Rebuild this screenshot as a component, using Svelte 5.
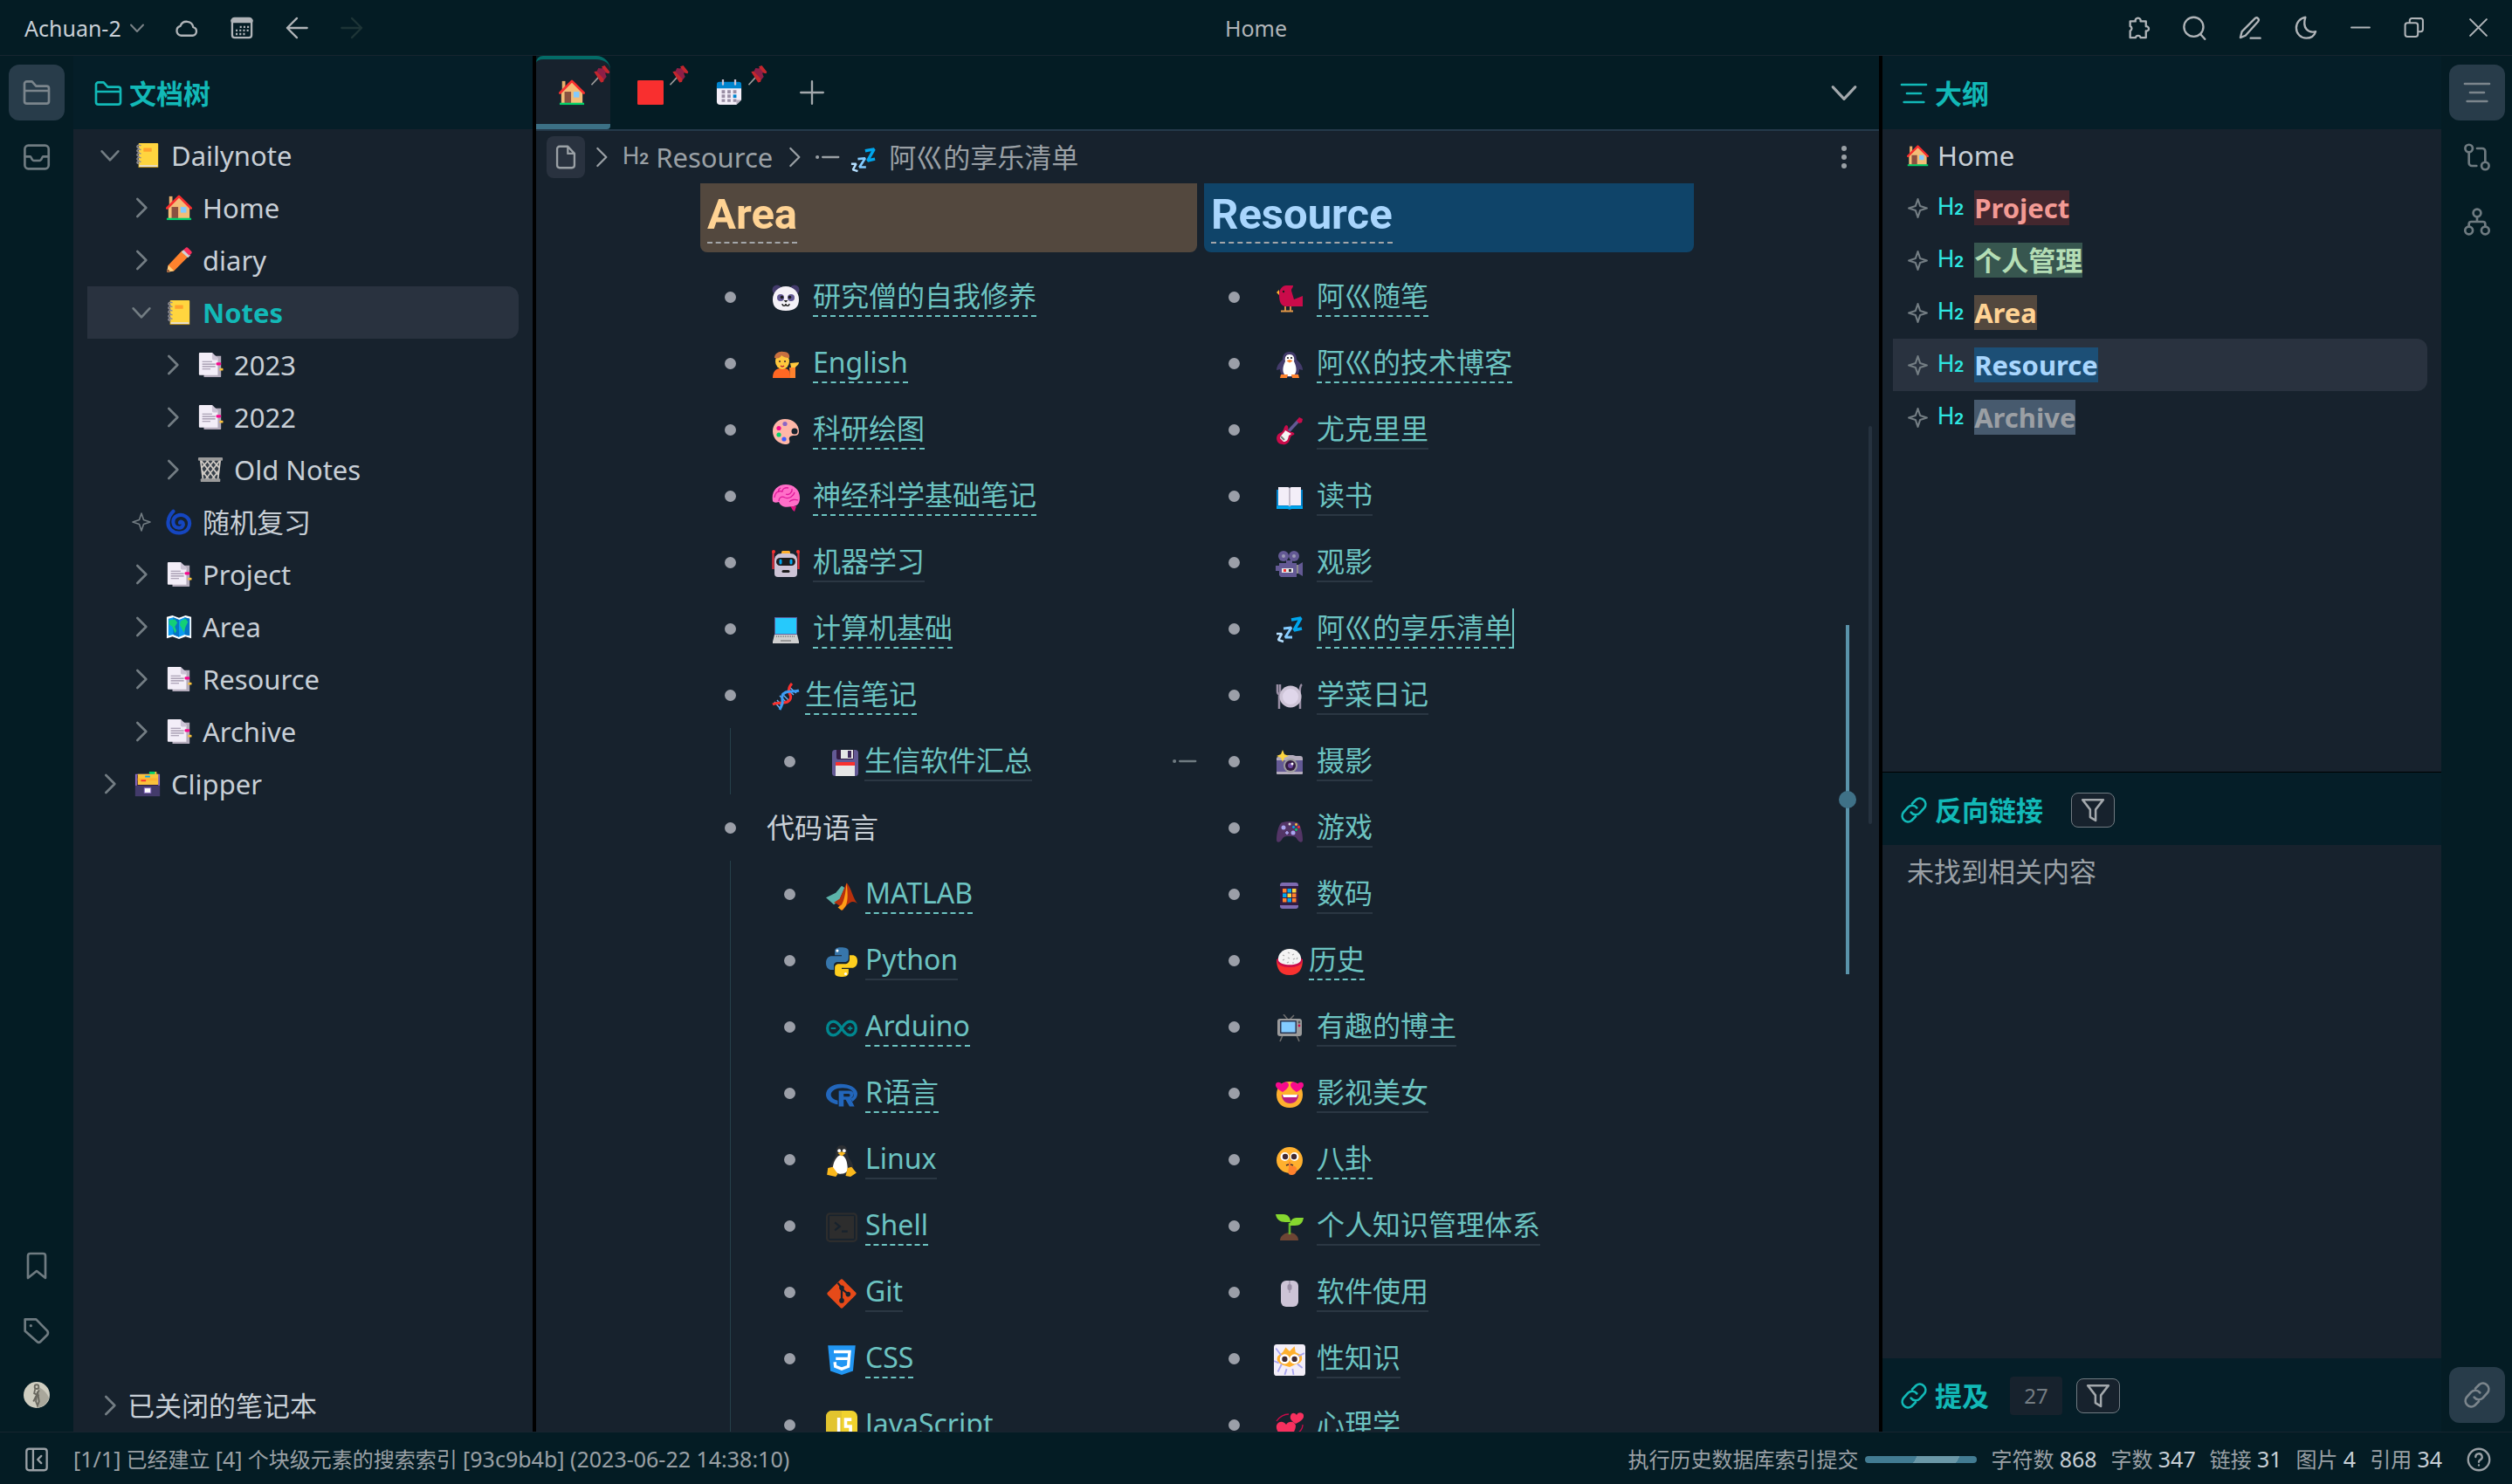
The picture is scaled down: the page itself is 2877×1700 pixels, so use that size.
<script>
  const line = {
    down: '<path d="M5 8.500l7 7.500 7-7.500"/>',
    right: '<path d="M8.500 4.500L16 12l-7.500 7.500"/>',
    cloud: '<path d="M6.500 19.500a4.800 4.800 0 0 1-.9-9.400 6.600 6.600 0 0 1 12.700 1.200 4.200 4.200 0 0 1-.5 8.200z"/>',
    calendar: '<rect x="2.500" y="2.500" width="19" height="19" rx="2.500"/><path d="M3 5h18" stroke-width="4"/><path d="M10 11h9M6 14.500h13M6 18h9" stroke-dasharray="1.800 1.800" stroke-linecap="butt"/>',
    back: '<path d="M12 2.500L2.500 12l9.500 9.500M2.500 12h19.500"/>',
    forward: '<path d="M12 2.500l9.500 9.500-9.500 9.500M21.500 12H2"/>',
    puzzle: '<path d="M4 5.500h5.200a2.600 2.600 0 1 1 5 0h5.300v5a2.300 2.300 0 1 1 0 4.500v6.500h-5.200a2.600 2.600 0 0 0-5 0H4v-6.700a2.500 2.500 0 0 0 0-4.600z"/>',
    search: '<circle cx="11.500" cy="11" r="9.500"/><path d="M18 18l4.500 5"/>',
    pen: '<path d="M2.500 21.500l1.500-6L17 2.500c2-1.500 4.500 1 3 3L7.500 19.500zM12.500 22h9.500"/>',
    moon: '<path d="M11.500 1.500C6 2.500 2.500 6.800 2.500 12c0 5.600 4.300 10 9.800 10 4.400 0 8-2.500 9.200-6.500-7 2-13.500-3-10-14z"/>',
    minus: '<path d="M2 12h20"/>',
    restore: '<rect x="2.500" y="7" width="14" height="15" rx="2.500"/><path d="M7.500 6.500V5A2.500 2.500 0 0 1 10 2h9A2.500 2.500 0 0 1 22 5v9a2.500 2.500 0 0 1-2.500 2.500h-2"/>',
    close: '<path d="M3 3l18 18M21 3L3 21"/>',
    folder: '<path d="M1.500 19V4.500a2 2 0 0 1 2-2H8l3.500 4H20.500a2 2 0 0 1 2 2V19.500a2 2 0 0 1-2 2H3.500a2 2 0 0 1-2-2zM1.500 10.500h21"/>',
    inbox: '<rect x="1.800" y="2" width="20.500" height="20" rx="3"/><path d="M2 11.500h4.500c.800 0 1.300 3.500 3 3.500h5c1.700 0 2.200-3.500 3-3.500H22"/>',
    bookmark: '<path d="M4.500 22.500V3.500a2 2 0 0 1 2-2h11a2 2 0 0 1 2 2v19L12 16.500z"/>',
    tag: '<path d="M2 2.500h9.500L21.200 12.500a3 3 0 0 1 0 3.200l-6 6a2 2 0 0 1-2.800 0L2 12.500z"/><path d="M7 8h.01" stroke-width="2.400"/>',
    list: '<path d="M1.500 4.500h21M6 12h12M3.500 19.500h17"/>',
    branch: '<circle cx="5" cy="4.500" r="3.200"/><circle cx="19" cy="19.500" r="3.200"/><path d="M5 8v9a2.500 2.500 0 0 0 2.500 2.500h4M19 16V7a2.500 2.500 0 0 0-2.500-2.500H12"/>',
    graph: '<circle cx="12" cy="4.500" r="3.300"/><circle cx="5" cy="19.500" r="3.300"/><circle cx="19" cy="19.500" r="3.300"/><path d="M12 8v4M5 16v-2a2 2 0 0 1 2-2h10a2 2 0 0 1 2 2v2"/>',
    link: '<path d="M10.500 6.500L14 3a5 5 0 0 1 7 7l-4 4.500a5 5 0 0 1-7.500-.5M13.500 17.500L10 21a5 5 0 0 1-7-7l4-4.500a5 5 0 0 1 7.500.5"/>',
    funnel: '<path d="M2.500 2.500h19l-7 9v10l-5-3v-7z"/>',
    page: '<path d="M14 1.500H6a2.500 2.500 0 0 0-2.500 2.500v16A2.500 2.500 0 0 0 6 22.500h12a2.500 2.500 0 0 0 2.500-2.500V8.500zM14 2v6.500h6"/>',
    plus: '<path d="M12 1v22M1 12h22"/>',
    dots: '<path d="M12 4.500h.01M12 12h.01M12 19.500h.01" stroke-width="4.500"/>',
    item: '<path d="M1.800 12h.01" stroke-width="3.500"/><path d="M7 12h15.500"/>',
    spark: '<path d="M12 2l2.500 7.500L22 12l-7.500 2.500L12 22l-2.500-7.500L2 12l7.500-2.500z"/>',
    dock: '<rect x="2" y="1.500" width="20" height="21" rx="2.500"/><path d="M8.500 2v20M16.500 8.500L13 12l3.500 3.500"/>',
    help: '<circle cx="12" cy="12" r="10.500"/><path d="M8.800 9.500a3.200 3.200 0 1 1 4.600 2.800c-1 .5-1.400 1-1.400 2M12 17.500h.01"/>'
  };

  const art = {
    notebook: '<rect x="5" y="1" width="24" height="30" rx="1" fill="#ffd53f"/><path d="M6 28h22v1.800H6z" fill="#e3dfe6"/><path d="M5 30h24v1H5z" fill="#b58a1c"/><rect x="11" y="7" width="10" height="4.500" rx=".6" fill="#ffa22d"/><g fill="none" stroke="#8d8a93" stroke-width="1.600"><path d="M8 4c-5-2-7 3-2 3M8 9c-5-2-7 3-2 3M8 14c-5-2-7 3-2 3M8 19c-5-2-7 3-2 3M8 24c-5-2-7 2-2 2"/></g>',
    house: '<path d="M4 2h4v12H4z" fill="#e8b06c"/><path d="M3 16L16 3l13 13v13H3z" fill="#f3bd78"/><path d="M1.500 16.500L16 2l14.500 14.500" fill="none" stroke="#f92f2f" stroke-width="3" stroke-linejoin="round" stroke-linecap="round"/><path d="M7 15h8v14H7z" fill="#8a5140"/><path d="M18 15h7v7h-7z" fill="#83cbff"/><path d="M1 28.500h30V31H1z" fill="#00d26a"/>',
    pencil: '<path d="M1 31l2-9L20 4l8 7L10 29z" fill="#ff822d"/><path d="M1 31l2-9 7 7z" fill="#ffce7c"/><path d="M1 31l1-4 3 2.500z" fill="#7d4533"/><path d="M19 6l3-3 8 7-3 3z" fill="#d3d3d3"/><path d="M21.500 3.500L24 1c1-1 2-1 3 0l4 4c1 1 1 2 0 3l-2.500 2.500z" fill="#f8305e"/>',
    papers: '<path d="M8 5h21v25a1 1 0 0 1-1 1H8z" fill="#b4acbc"/><path d="M3 1h15l7 7v20.500H3a1 1 0 0 1-1-1V2a1 1 0 0 1 1-1z" fill="#f3eef8"/><path d="M18 1l7 7v2h-5a2 2 0 0 1-2-2z" fill="#cdc4d6"/><path d="M6 12h12M6 15h16M6 18h16M6 21h10" stroke="#998ea4" stroke-width="1.200"/><rect x="23" y="13" width="6" height="3.500" rx="1.200" fill="#f70a8d"/><rect x="27" y="20" width="4.500" height="3" rx="1" fill="#f9c23c"/>',
    bin: '<path d="M3 4h26l-3 27H6z" fill="#37404a"/><path d="M4 4l18 24M11 4l14 18M18 4l9 10M28 4L10 28M21 4L7 22M14 4L5 14M5 16l10 13M27 16L17 29M4 4l3 25M28 4l-3 25" stroke="#d0cbc5" stroke-width="1.800"/><rect x="1" y="1" width="30" height="4" rx="1" fill="#9b9b9b"/><rect x="4" y="27" width="24" height="4" rx="1" fill="#9b9b9b"/>',
    cyclone: '<g fill="none" stroke="#1546c0" stroke-width="4.400" stroke-linecap="round"><path d="M17 17c0-3 5-1 4 3-2 5-11 4-12-3-1-8 8-12 15-8 8 5 6 18-5 20C8 31 1 23 3 14 4 8 7 5 9 3"/></g>',
    map: '<path d="M1 4l7-2 8 3 8-3 7 2v26l-7-2-8 3-8-3-7 2z" fill="#fff"/><path d="M3 6l6-1.500 7 3 7-3L29 6v21l-6-1.500-7 3-7-3L3 27z" fill="#0a9bf0"/><path d="M9 4.500l7 3v21l-7-3zM23 4.500L29 6v21l-6-1.500z" fill="#0773c4"/><path d="M4 8l7-1 3 4-3 5 2 5-2 3-3-8-4-3zM18 9l6-3 3 4-3 6-2 7-3-6-2-3z" fill="#14cf76"/>',
    cabinet: '<path d="M1 4h30v27H1z" fill="#8b6bc7"/><path d="M3 5h26v14H3z" fill="#321b41"/><path d="M4 4h15V1h8v3h2v13H4z" fill="#f9c23c"/><path d="M18 1h7v3h-7z" fill="#00d26a"/><path d="M4 9h24v3H4z" fill="#ffb02e"/><rect x="13" y="6" width="6" height="2" fill="#00a6ed"/><rect x="8" y="11" width="6" height="2" fill="#f8312f"/><path d="M1 18h30v13H1z" fill="#433b6b"/><rect x="12" y="21" width="8" height="6" fill="#fff" stroke="#8b6bc7"/>',
    red: '<rect x="0" y="1" width="32" height="30" rx="1.500" fill="#f92f2f"/>',
    date: '<path d="M1 8h30v17l-6 6H5a4 4 0 0 1-4-4z" fill="#f3eef8"/><path d="M31 25l-6 6v-6z" fill="#b4acbc"/><path d="M1 6a3 3 0 0 1 3-3h24a3 3 0 0 1 3 3v5H1z" fill="#0084ce"/><path d="M8.500 0v6M23.500 0v6" stroke="#cdc4d6" stroke-width="2.400" stroke-linecap="round"/><path d="M7 13h4v4H7zM14 13h4v4h-4zM21 13h4v4h-4zM7 18.500h4v4H7zM14 18.500h4v4h-4zM7 24h4v3.500H7zM14 24h4v3.500h-4zM21 24h4v3.500h-4z" fill="#998ea4"/><path d="M21 18.500h4v4h-4z" fill="#0084ce"/>',
    pin: '<path d="M14 18L2 31" stroke="#9b9b9b" stroke-width="2.400"/><path d="M10 10l12 13 4-5-2-5 3-6-4-5-5 3-5-1z" fill="#8e1f47"/><path d="M20 1l3-1 8 10-1 3-4-1-8-10zM6 10l4-1 12 13-1 4-4 1z" fill="#c4262e"/>',
    zzz: '<g fill="none" stroke-linejoin="bevel"><path d="M18 4l11-2-8 14 9-2" stroke="#00a6ed" stroke-width="3.600"/><path d="M9 14l9-1-7 11h8" stroke="#83cbff" stroke-width="2.800"/><path d="M1 20l6 0-4 7 6 2" stroke="#b5dfff" stroke-width="2.600"/></g>',
    panda: '<circle cx="6" cy="6" r="5.500" fill="#433b6b"/><circle cx="26" cy="6" r="5.500" fill="#433b6b"/><path d="M16 2c9 0 15 7 15 15s-4 13-15 13S1 25 1 17 7 2 16 2z" fill="#f4f1f7"/><ellipse cx="10" cy="15" rx="4" ry="4" fill="#635994"/><ellipse cx="22" cy="15" rx="4" ry="4" fill="#635994"/><circle cx="11.500" cy="14.500" r="1.800" fill="#1c1c1c"/><circle cx="20.500" cy="14.500" r="1.800" fill="#1c1c1c"/><path d="M13.500 18h5L16 20.500z" fill="#1c1c1c"/><path d="M12 22c0 3 4 3 4 0 0 3 4 3 4 0" fill="none" stroke="#1c1c1c" stroke-width="1.300"/>',
    person: '<path d="M1 31c0-7 3-11 9-11h4c6 0 7 4 7 11z" fill="#ff6723"/><path d="M20 19h7v12h-6z" fill="#ff822d"/><path d="M21 14l10-1c0 3-3 4-4 6h-5z" fill="#ffc83d"/><ellipse cx="12" cy="12" rx="8" ry="9" fill="#ffc83d"/><path d="M3 8c0-5 5-8 10-7 5-.5 8 3 7 7-4 0-7-1-9-3-1 3-4 4-8 3z" fill="#c8703f"/><circle cx="9" cy="12" r="1.100" fill="#402a32"/><circle cx="15" cy="12" r="1.100" fill="#402a32"/><path d="M10 17q2 1.800 4 0" stroke="#bb1d3b" stroke-width="1.400" fill="none"/>',
    palette: '<path d="M15 2C7 2 1 8 1 16s6 14 14 15c5 0 6-2 5-5-1-4 2-5 6-5 3 0 5-1 5-5C31 8 24 2 15 2z" fill="#ffb7a8"/><circle cx="26" cy="16" r="3.500" fill="#17222d"/><circle cx="15" cy="7.500" r="2.600" fill="#8d65c5"/><circle cx="8" cy="12.500" r="2.600" fill="#f70a8d"/><circle cx="8" cy="20" r="2.600" fill="#00d26a"/><circle cx="14" cy="25" r="2.600" fill="#3f5fff"/>',
    brain: '<path d="M20 25l8 1-2 6c-2-1-3-3-4-5z" fill="#e0107f"/><path d="M1 20C-1 9 6 1 16 1c9 0 16 6 16 15 0 8-4 10-9 10-8 2-13 0-15-5-3 1-6 1-7-1z" fill="#ff6fc8"/><path d="M3 16c1-7 5-8 9-7 0-3 3-5 7-4M8 20c0-4 3-6 7-4 5 2 10-2 11-6M16 12c4 2 8-3 7-6M20 21c2-3 7-3 10-2M10 5c-2 1-3 3-2 5" fill="none" stroke="#e0189a" stroke-width="1.300"/>',
    robot: '<path d="M1.500 2v20M30.500 2v20" stroke="#e0303a" stroke-width="2.200"/><circle cx="2" cy="2" r="2" fill="#f8312f"/><circle cx="30" cy="2" r="2" fill="#f8312f"/><rect x="11" y="1" width="10" height="4" rx="1.500" fill="#ffb02e"/><path d="M3 12c0-5 3-8 8-8h10c5 0 8 3 8 8v15a4 4 0 0 1-4 4H7a4 4 0 0 1-4-4z" fill="#cdc4d6"/><rect x="5" y="9" width="22" height="9" rx="4.500" fill="#1c1c1c"/><rect x="8.500" y="10.500" width="3" height="6" rx="1.500" fill="#00a6ed"/><rect x="20.500" y="10.500" width="3" height="6" rx="1.500" fill="#00a6ed"/><rect x="11.500" y="23" width="9" height="3" rx="1.500" fill="#1c1c1c"/>',
    laptop: '<path d="M3 1h26v20H3z" fill="#5b62a0"/><path d="M4 2h24v18H4z" fill="#26c9fc"/><path d="M3 21h26l2 8v2H1v-2z" fill="#cfcfcf"/><path d="M5 23h22" stroke="#8f8f8f" stroke-width="2" stroke-dasharray="1 1"/><path d="M10 28h12" stroke="#999" stroke-width="2"/>',
    dna: '<g stroke="#6bb1f5" stroke-width="1.400"><path d="M20 5l8 7M18 8l7 6M12 13l8 8M9 15l8 8M3 22l6 7M6 20l5 6"/></g><path d="M23 1c-4 4-4 9-2 13s-1 9-8 9c-4 0-8 0-12 2" fill="none" stroke="#f8312f" stroke-width="3"/><path d="M31 9c-6 2-9 0-15 2-7 3-3 9-4 13-1 3-2 5-3 7" fill="none" stroke="#3b9cf5" stroke-width="3"/>',
    disk: '<rect x="1" y="1" width="30" height="30" rx="3.500" fill="#635994"/><path d="M6 1h20v9a2 2 0 0 1-2 2H8a2 2 0 0 1-2-2z" fill="#321b41"/><path d="M11 1h14v10H11z" fill="#e6e6e6"/><path d="M19 2h4v8h-4z" fill="#402a5b"/><path d="M5 16h22v15H5z" fill="#e6e6e6"/><path d="M5 15h22v4H5z" fill="#f8312f"/>',
    matlab: '<path d="M0 18l10-5 6-7 3 2-6 14-5 3z" fill="#5cb4ab"/><path d="M8 23l6-4L21 3c4 3 6 15 11 21-4-3-8-3-15 7-2-4-5-7-9-8z" fill="#b8300c"/><path d="M21 3c-1 9-2 17-5 22l-4 3 4 3c6-4 7-11 5-28z" fill="#ff9d16"/>',
    python: '<path d="M15 1c-5 0-6 2-6 4v4h7v1H6c-3 0-6 2-6 7s3 7 6 7h2v-4c0-3 2-4 4-4h7c3 0 4-2 4-4V5c0-3-3-4-8-4z" fill="#3776ab"/><path d="M17 31c5 0 6-2 6-5v-3h-7v-1h10c4 0 6-3 6-7s-2-6-5-6h-3v4c0 3-2 5-5 5h-6c-3 0-4 2-4 4v5c0 3 3 4 8 4z" fill="#ffcf1f"/><circle cx="11.500" cy="4.500" r="1.400" fill="#fff"/><circle cx="20" cy="28" r="1.400" fill="#fff"/>',
    arduino: '<g fill="none" stroke="#00878f" stroke-width="3"><path d="M16 16c-3-5-5-7-8.500-7S1.500 12 1.500 16s2.500 7 6 7S13 21 16 16s5-7 8.500-7 6 3 6 7-2.500 7-6 7S19 21 16 16z"/><path d="M5 16h5M22 16h5M24.500 13.500v5" stroke-width="1.600"/></g>',
    rlang: '<path fill-rule="evenodd" d="M15 5C6 5 0 10 0 16c0 5 5 9 12 10v-4c-4-1-7-3-7-6 0-4 5-7 12-7s11 3 11 6c0 2-1 4-3 5l2 3c3-2 5-5 5-8 0-6-8-10-17-10zM13 12h11c5 0 6 7 1 8l4 8h-5l-4-7h-2v7h-5zm5 3v3h5c2 0 2-3 0-3z" fill="#2266bb"/>',
    linux: '<path d="M16 0c5 0 6 4 6 9 1 5 6 8 6 15l-4 6H8l-4-6c0-6 5-10 6-15 0-5 1-9 6-9z" fill="#2c2f33"/><path d="M15 10c5 0 7 8 7 14 0 4-4 5-7 5s-8-2-8-6c0-5 4-13 8-13z" fill="#fff"/><circle cx="13.500" cy="5.500" r="1.700" fill="#fff"/><circle cx="18.500" cy="5.500" r="1.700" fill="#fff"/><path d="M12 8l4-1.500L20 8l-4 3z" fill="#fbb81c"/><path d="M1 30l1-7 5-1 5 7-2 3zM20 31l2-8 4-1 5 6-6 4z" fill="#fbb81c"/>',
    shell: '<rect x="1" y="2" width="30" height="28" rx="3" fill="none" stroke="#2d2d2d" stroke-width="2"/><rect x="3.500" y="4.500" width="25" height="23" fill="#2d2d2d"/><path d="M9 11l5 4-5 4M16 20h6" fill="none" stroke="#17222d" stroke-width="2"/>',
    git: '<path d="M14.500 2a2 2 0 0 1 3 0L30 14.500a2 2 0 0 1 0 3L17.500 30a2 2 0 0 1-3 0L2 17.500a2 2 0 0 1 0-3z" fill="#e64a19"/><path d="M12 5l4 5v13M16 11l6 5" stroke="#17222d" stroke-width="2" fill="none"/><circle cx="16" cy="10" r="2.500" fill="#17222d"/><circle cx="16" cy="23" r="2.500" fill="#17222d"/><circle cx="22.500" cy="16.500" r="2.500" fill="#17222d"/>',
    css: '<path d="M2 1h28l-2.500 26L16 31 4.500 27z" fill="#2196f3"/><path d="M8 7.500h16l-1.300 15L16 25l-6.500-2.500L9 18M22 14.500H10" fill="none" stroke="#fff" stroke-width="3"/>',
    js: '<rect x="0" y="0" width="32" height="32" rx="6" fill="#f0d22e"/><path d="M0 6a6 6 0 0 1 6-6h10v32H0z" fill="#e2c42f"/><path d="M13 7v16c0 3-4 4-6 1M26 9h-6v7h5v9h-6" fill="none" stroke="#fff" stroke-width="3.200"/>',
    bird: '<path d="M4 12C4 5 8 1 12 1h8c0 3-2 3-2 6l3 10 10-4v12H12c-6 0-8-6-8-13z" fill="#ca0b4a"/><path d="M4 6L1 9l3 3z" fill="#ffb02e"/><circle cx="9" cy="8" r="1.200" fill="#1c1c1c"/><path d="M11 25v5M17 25v5M6 30.500h14" stroke="#e19747" stroke-width="1.800"/>',
    penguin: '<path d="M16 1c6 0 8 4 8 9 2 2 7 6 7 12l-4-1c0 6-4 9-11 9S5 27 5 21l-4 1c0-6 5-10 7-12 0-5 2-9 8-9z" fill="#433b6b"/><path d="M16 4c4 0 6 3 5 8 4 8 4 17-5 17s-9-9-5-17c-1-5 1-8 5-8z" fill="#fff"/><circle cx="14" cy="8" r="1.100" fill="#1c1c1c"/><circle cx="18" cy="8" r="1.100" fill="#1c1c1c"/><path d="M12.500 11.500q3.500-3 7 0l-3.500 2z" fill="#ff822d"/><path d="M6 27h8l-1 4H5zM18 27h8l1 4h-8z" fill="#ff822d"/>',
    guitar: '<path d="M13 18L27 3" stroke="#635994" stroke-width="3.500"/><path d="M24 4l3-4 4 2-1 4-3 1z" fill="#ca0b4a"/><path d="M12 9c2 0 3 3 2 6l4 2c3 0 4 2 3 3-4 1-4 3-5 6-2 6-8 6-12 4-4-3-4-10 1-12 5-1 4-8 7-9z" fill="#ca0b4a"/><path d="M11 15l7 4-3 2c-1 5-2 7-6 7l-4-4c0-3 4-5 6-9z" fill="#f4f4f4"/><path d="M6 22l4 4" stroke="#777" stroke-width="2"/>',
    book: '<path d="M1 7h30v22H18q-2 2-4 0H1z" fill="#0084ce"/><path d="M1 26h30v3H1z" fill="#00a6ed"/><path d="M3 4h11q2 0 2 2 0-2 2-2h11v21H18q-2 0-2 1.500Q16 25 14 25H3z" fill="#f3eef8"/><path d="M16 5v21" stroke="#b4acbc" stroke-width="1.500"/>',
    movie: '<circle cx="9" cy="7" r="6" fill="#635994"/><circle cx="21" cy="7" r="6" fill="#635994"/><circle cx="9" cy="7" r="2" fill="#9b9bb5"/><circle cx="21" cy="7" r="2" fill="#9b9bb5"/><path d="M4 15h20v16H6l-2-2zM26 17l5-3v16l-5-3zM12 12h7v4h-7zM0 18h5v6H0z" fill="#635994"/><path d="M24 17h2v10h-2z" fill="#8d8d8d"/><rect x="7" y="21" width="13" height="5" fill="#e6e6e6"/><path d="M9 22h3v3H9z" fill="#f8312f"/><path d="M15 22h3v3h-3z" fill="#333"/>',
    plate: '<path d="M2 2v8q0 3 2 3v17M5 2v10M30 2q-3 2-2 14v14" fill="none" stroke="#998ea4" stroke-width="2.500"/><circle cx="17" cy="16" r="12.500" fill="#cdc4d6"/><circle cx="17" cy="16" r="9" fill="#dfd6ea"/>',
    camera: '<rect x="1" y="10" width="30" height="19" rx="2" fill="#635994"/><path d="M1 13v-2a2 2 0 0 1 2-2h8l3-2h6l3 1h5a3 3 0 0 1 3 3v2zM1 26h30v2a1 1 0 0 1-1 1H2a1 1 0 0 1-1-1z" fill="#b4acbc"/><circle cx="17" cy="19" r="8" fill="#9b9b9b"/><circle cx="17" cy="19" r="6" fill="#321b41"/><circle cx="17" cy="19" r="3" fill="#6d4aa0"/><circle cx="19" cy="17" r="1.500" fill="#fff"/><path d="M8 1l2 5 5 2-5 2-2 5-2-5-5-2 5-2z" fill="#fcd53f"/>',
    pad: '<path d="M8 8q8-2 16 0c4 0 7 12 7 20 0 4-4 3-6 0-2-4-4-4-9-4s-7 0-9 4c-2 3-6 4-6 0C1 20 4 8 8 8z" fill="#533566"/><circle cx="9" cy="14" r="2.500" fill="#a9a5f0"/><circle cx="20" cy="20" r="2.500" fill="#a9a5f0"/><circle cx="16" cy="10" r="1.500" fill="#ddd"/><path d="M11 20h4M13 18v4" stroke="#a9a5f0" stroke-width="1.600"/><circle cx="23.500" cy="10.500" r="1.400" fill="#f9c23c"/><circle cx="26.500" cy="13.500" r="1.400" fill="#f8312f"/><circle cx="20.500" cy="13.500" r="1.400" fill="#00a6ed"/><circle cx="23.500" cy="16.500" r="1.400" fill="#00d26a"/>',
    phone: '<rect x="5" y="1" width="21" height="30" rx="3" fill="#7d6bb0"/><path d="M5 5h21v22H5z" fill="#321b41"/><path d="M8 8h4.500v4.500H8zM19 13.500h4.500V18H19zM8 19h4.500v4.500H8zM19 19h4.500v4.500H19z" fill="#ff822d"/><path d="M13.500 8H18v4.500h-4.500zM8 13.500h4.500V18H8zM13.500 19H18v4.500h-4.500z" fill="#00a6ed"/><path d="M19 8h4.500v4.500H19zM13.500 13.500H18V18h-4.500z" fill="#fcd53f"/>',
    rice: '<path d="M1 13h30c0 11-4 18-15 18S1 24 1 13z" fill="#f8312f"/><path d="M1 14q2 8 15 8t15-8q-2-6-15-6T1 14z" fill="#ca0b4a"/><path d="M3 14C2 7 8 1 16 1s14 6 13 13c-2 7-24 7-26 0z" fill="#f4f4f4"/><path d="M8 8l2 1M14 5l2 1M21 7l-2 1M8 14l2-1M14 11l2 1M20 13l2-1M25 11l-1 2M13 17l2-1M19 17h2" stroke="#aaa" stroke-width="1.200"/>',
    tv: '<path d="M9 0l5 6M21 1l-5 5M8 24l-3 7M24 24l3 7" stroke="#6d6d6d" stroke-width="1.600"/><rect x="2" y="5" width="28" height="20" rx="3" fill="#9b9b9b"/><rect x="5" y="7" width="19" height="15" rx="1" fill="#2a3550"/><rect x="6.500" y="8.500" width="16" height="12" fill="#83cbff"/><circle cx="27" cy="9" r="1.400" fill="#555"/><circle cx="27" cy="13" r="1.400" fill="#ca0b4a"/>',
    love: '<path d="M16 1c9 0 15 6 15 15s-6 15-15 15S1 25 1 16 7 1 16 1z" fill="#ffb02e"/><path d="M8 13C3 10 0 8 0 5c0-4 5-4 7-1 3-4 8-3 8 1 0 3-4 6-7 8zM24 13c-3-2-7-5-7-8 0-4 5-5 8-1 2-3 7-3 7 1 0 3-3 5-8 8z" fill="#f70a8d"/><path d="M7 16h19c0 6-4 10-9.500 10S7 22 7 16z" fill="#bb1d80"/><path d="M8 16h17l-1 3H9z" fill="#fff"/>',
    hush: '<circle cx="16" cy="15" r="15" fill="#ffb02e"/><circle cx="10.500" cy="11" r="5" fill="#fff"/><circle cx="21.500" cy="11" r="5" fill="#fff"/><circle cx="11" cy="11" r="3.200" fill="#402a32"/><circle cx="21" cy="11" r="3.200" fill="#402a32"/><path d="M12 21q4-2 8 0" stroke="#402a32" stroke-width="1.500" fill="none"/><path d="M15 19q0-4 2-2v5c4-1 8 0 7 5-1 4-3 5-6 5-4 0-4-3-3-8z" fill="#ff822d"/>',
    plant: '<path d="M5 31c0-5 5-9 11-9s10 4 10 9z" fill="#6d4534"/><path d="M16 24V11" stroke="#5fb52a" stroke-width="2.600"/><path d="M0 1h9c5 0 8 4 8 9H11C5 10 1 7 0 1z" fill="#86d72f"/><path d="M32 5h-8c-5 0-8 4-8 9h6c6 0 9-3 10-9z" fill="#86d72f"/>',
    mouse: '<rect x="6" y="1" width="20" height="30" rx="6" fill="#cdc4d6"/><path d="M16 1v14" stroke="#998ea4" stroke-width="1.200"/><rect x="13.500" y="5" width="5" height="7" rx="2.500" fill="#998ea4"/>',
    wild: '<rect x="0" y="0" width="32" height="32" rx="3" fill="#f3eef8"/><path d="M4 12l5-4 3-5 4 4 5-5 1 6 6 3c2 5-1 8-5 9l-7 3-7-2c-5-2-7-5-5-9z" fill="#ffb02e"/><path d="M2 4l6 8M4 28l4-8M11 31l2-6M20 31l-1-6M29 24l-5-4M31 9l-6 3M0 17l5 2" stroke="#a9a5f0" stroke-width="1.600"/><circle cx="11" cy="15" r="5" fill="#fff"/><circle cx="21" cy="15" r="5" fill="#fff"/><circle cx="11" cy="15" r="2.800" fill="#402a32"/><circle cx="21" cy="15" r="2.800" fill="#402a32"/>',
    hearts: '<path d="M23 13c-5-3-7-6-6-9 1-4 5-4 7-1 2-4 7-3 8 0 1 4-3 7-9 10z" fill="#f8305e"/><path d="M13 31C5 26 0 21 1 15c2-6 9-5 11-1 3-5 10-4 11 1 0 6-4 11-10 16z" fill="#f8305e"/><path d="M1 10c3-5 9-8 14-8M31 14c0 5-2 7-5 9" stroke="#ca0b4a" stroke-width="1.300" fill="none"/>'
  };

  const tree = [
    { level: 1, open: true, icon: 'notebook', name: 'Dailynote' },
    { level: 2, icon: 'house', name: 'Home' },
    { level: 2, icon: 'pencil', name: 'diary' },
    { level: 2, open: true, icon: 'notebook', name: 'Notes', current: true },
    { level: 3, icon: 'papers', name: '2023' },
    { level: 3, icon: 'papers', name: '2022' },
    { level: 3, icon: 'bin', name: 'Old Notes' },
    { level: 2, leaf: true, icon: 'cyclone', name: '随机复习' },
    { level: 2, icon: 'papers', name: 'Project' },
    { level: 2, icon: 'map', name: 'Area' },
    { level: 2, icon: 'papers', name: 'Resource' },
    { level: 2, icon: 'papers', name: 'Archive' },
    { level: 1, icon: 'cabinet', name: 'Clipper' }
  ];

  const area = [
    { icon: 'panda', name: '研究僧的自我修养', dash: true },
    { icon: 'person', name: 'English', dash: true },
    { icon: 'palette', name: '科研绘图', dash: true },
    { icon: 'brain', name: '神经科学基础笔记', dash: true },
    { icon: 'robot', name: '机器学习' },
    { icon: 'laptop', name: '计算机基础', dash: true },
    { icon: 'dna', name: '生信笔记', dash: true, tight: true,
      children: [{ icon: 'disk', name: '生信软件汇总', tight: true, handle: true }] },
    { text: '代码语言',
      children: [
        { icon: 'matlab', name: 'MATLAB', dash: true, logo: true },
        { icon: 'python', name: 'Python', logo: true },
        { icon: 'arduino', name: 'Arduino', dash: true, logo: true },
        { icon: 'rlang', name: 'R语言', dash: true, logo: true },
        { icon: 'linux', name: 'Linux', logo: true },
        { icon: 'shell', name: 'Shell', dash: true, logo: true },
        { icon: 'git', name: 'Git', logo: true },
        { icon: 'css', name: 'CSS', dash: true, logo: true },
        { icon: 'js', name: 'JavaScript', logo: true }
      ] }
  ];

  const resource = [
    { icon: 'bird', name: '阿巛随笔', dash: true },
    { icon: 'penguin', name: '阿巛的技术博客', dash: true },
    { icon: 'guitar', name: '尤克里里' },
    { icon: 'book', name: '读书' },
    { icon: 'movie', name: '观影' },
    { icon: 'zzz', name: '阿巛的享乐清单', dash: true, caret: true },
    { icon: 'plate', name: '学菜日记' },
    { icon: 'camera', name: '摄影' },
    { icon: 'pad', name: '游戏' },
    { icon: 'phone', name: '数码' },
    { icon: 'rice', name: '历史', dash: true, tight: true },
    { icon: 'tv', name: '有趣的博主' },
    { icon: 'love', name: '影视美女' },
    { icon: 'hush', name: '八卦', dash: true },
    { icon: 'plant', name: '个人知识管理体系' },
    { icon: 'mouse', name: '软件使用' },
    { icon: 'wild', name: '性知识', logo: true },
    { icon: 'hearts', name: '心理学' }
  ];

  const outline = [
    { name: 'Project', tone: 'rose' },
    { name: '个人管理', tone: 'green' },
    { name: 'Area', tone: 'amber' },
    { name: 'Resource', tone: 'blue', current: true },
    { name: 'Archive', tone: 'slate' }
  ];

  const tabs = [
    { icon: 'house', label: 'Home', current: true },
    { icon: 'red', label: 'Tasks' },
    { icon: 'date', label: 'Calendar' }
  ];

  const windowTools = [
    ['puzzle', '插件'], ['search', '搜索'], ['pen', '只读'], ['moon', '外观'],
    ['minus', '最小化'], ['restore', '还原'], ['close', '关闭']
  ];

  const counts = [['字符数', 868], ['字数', 347], ['链接', 31], ['图片', 4], ['引用', 34]];

  let position = $state(50);
</script>

{#snippet glyph(name)}
  <svg class="line g-{name}" viewBox="0 0 24 24" aria-hidden="true">{@html line[name]}</svg>
{/snippet}

{#snippet emoji(name)}
  <svg class="emoji" viewBox="0 0 32 32" aria-hidden="true">{@html art[name]}</svg>
{/snippet}

{#snippet level()}
  <span class="level">H<small>2</small></span>
{/snippet}

{#snippet items(list)}
  <ul>
    {#each list as item}
      <li>
        <div class="row" class:tight={item.tight} class:logo={item.logo}>
          <i class="bullet"></i>
          {#if item.text}
            <span>{item.text}</span>
          {:else}
            {@render emoji(item.icon)}
            <a href="#{item.name}" class:dash={item.dash} class:caret={item.caret}>{item.name}</a>
          {/if}
          {#if item.handle}
            <button class="handle" aria-label="拖动">{@render glyph('item')}</button>
          {/if}
        </div>
        {#if item.children}
          <div class="nested">{@render items(item.children)}</div>
        {/if}
      </li>
    {/each}
  </ul>
{/snippet}

<div class="app">
  <header class="top">
    <div class="side">
      <button class="workspace">Achuan-2 {@render glyph('down')}</button>
      <button aria-label="同步">{@render glyph('cloud')}</button>
      <button aria-label="日记">{@render glyph('calendar')}</button>
      <button aria-label="后退">{@render glyph('back')}</button>
      <button aria-label="前进" class="off">{@render glyph('forward')}</button>
    </div>
    <span class="title">Home</span>
    <div class="side tools">
      {#each windowTools as [name, label]}
        <button aria-label={label}>{@render glyph(name)}</button>
      {/each}
    </div>
  </header>

  <main>
    <nav class="rail">
      <button class="on" aria-label="文档树">{@render glyph('folder')}</button>
      <button aria-label="收集箱">{@render glyph('inbox')}</button>
      <span class="fill"></span>
      <button aria-label="书签">{@render glyph('bookmark')}</button>
      <button aria-label="标签">{@render glyph('tag')}</button>
      <button aria-label="账号">
        <svg class="avatar" viewBox="0 0 32 32" aria-hidden="true">
          <circle cx="16" cy="16" r="16" fill="#cfcdc0" />
          <path d="M18 6c8 4 12 10 13 14-3 7-8 11-15 12z" fill="#a9a79b" />
          <g fill="none" stroke="#6a685f" stroke-width="2">
            <circle cx="16" cy="6" r="2.5" />
            <path d="M14 9l-1 5 6 3M19 10l-7 14M17 12l-2 12 2 5 2-5z" />
          </g>
        </svg>
      </button>
    </nav>

    <aside class="docs">
      <h2 class="head">{@render glyph('folder')}文档树</h2>
      <div class="tree">
        {#each tree as node}
          <button class="node l{node.level}" class:current={node.current}>
            {@render glyph(node.leaf ? 'spark' : node.open ? 'down' : 'right')}
            {@render emoji(node.icon)}
            <span>{node.name}</span>
          </button>
        {/each}
      </div>
      <button class="node closed">{@render glyph('right')}<span>已关闭的笔记本</span></button>
    </aside>

    <section class="editor">
      <div class="tabs">
        {#each tabs as tab}
          <button class="tab" class:current={tab.current} aria-label={tab.label}>
            {@render emoji(tab.icon)}
            <span class="pin">{@render emoji('pin')}</span>
          </button>
        {/each}
        <button class="add" aria-label="新建">{@render glyph('plus')}</button>
        <span class="fill"></span>
        <button class="more" aria-label="切换页签">{@render glyph('down')}</button>
      </div>
      <div class="crumbs">
        <button class="doc" aria-label="文档">{@render glyph('page')}</button>
        {@render glyph('right')}
        <a href="#Resource">{@render level()}Resource</a>
        {@render glyph('right')}
        <a href="#list">{@render glyph('item')}{@render emoji('zzz')}阿巛的享乐清单</a>
        <span class="fill"></span>
        <button class="more" aria-label="更多">{@render glyph('dots')}</button>
      </div>
      <div class="page">
        <article class="area">
          <h1><a href="#Area">Area</a></h1>
          {@render items(area)}
        </article>
        <article class="resource">
          <h1><a href="#Resource">Resource</a></h1>
          {@render items(resource)}
        </article>
      </div>
      <input class="scrub" type="range" min="0" max="100" bind:value={position} aria-label="文档位置" />
      <i class="thumb"></i>
    </section>

    <aside class="info">
      <h2 class="head">{@render glyph('list')}大纲</h2>
      <div class="outline">
        <button class="node root">{@render emoji('house')}<span>Home</span></button>
        {#each outline as node}
          <button class="node" class:current={node.current}>
            {@render glyph('spark')}{@render level()}<mark class={node.tone}>{node.name}</mark>
          </button>
        {/each}
      </div>
      <h2 class="head ruled">
        {@render glyph('link')}反向链接
        <button class="filter" aria-label="筛选">{@render glyph('funnel')}</button>
      </h2>
      <p class="empty">未找到相关内容</p>
      <h2 class="head mention">
        {@render glyph('link')}提及
        <span class="count">27</span>
        <button class="filter" aria-label="筛选提及">{@render glyph('funnel')}</button>
      </h2>
    </aside>

    <nav class="rail">
      <button class="on" aria-label="大纲">{@render glyph('list')}</button>
      <button aria-label="关系图">{@render glyph('branch')}</button>
      <button aria-label="全局关系图">{@render glyph('graph')}</button>
      <span class="fill"></span>
      <button class="on" aria-label="反向链接">{@render glyph('link')}</button>
    </nav>
  </main>

  <footer>
    <button aria-label="停靠栏">{@render glyph('dock')}</button>
    <span class="message">
      <span>[1/1]</span> 已经建立 <span>[4]</span> 个块级元素的搜索索引 <span>[93c9b4b] (2023-06-22 14:38:10)</span>
    </span>
    <span class="fill"></span>
    <span>执行历史数据库索引提交</span>
    <div class="progress" role="progressbar" aria-label="索引进度"></div>
    <div class="counts">
      {#each counts as [label, value]}
        <span>{label} <b>{value}</b></span>
      {/each}
    </div>
    <button aria-label="帮助">{@render glyph('help')}</button>
  </footer>
</div>

<style>
  :global(body) {
    background: #041c24;
  }
  .app {
    --deep: #041c24;
    --head: #051e28;
    --base: #17222d;
    --raised: #29323f;
    --teal: #12b9b7;
    --link: #6cc3c1;
    --muted: #9aa0a5;
    --text: #c8cfd6;
    display: grid;
    grid-template-rows: 64px minmax(0, 1fr) 60px;
    height: 100vh;
    overflow: hidden;
    background: var(--deep);
    color: var(--text);
    font: 31px/40px 'Noto Sans', 'Noto Sans CJK SC', sans-serif;
  }
  .app :global(*) {
    box-sizing: border-box;
  }
  button {
    display: flex;
    align-items: center;
    padding: 0;
    border: 0;
    background: none;
    color: inherit;
    font: inherit;
  }
  a {
    color: inherit;
    text-decoration: none;
  }
  ul {
    margin: 0;
    padding: 0;
    list-style: none;
  }
  svg {
    display: block;
    flex: none;
  }
  .line {
    width: 28px;
    height: 28px;
    fill: none;
    stroke: currentColor;
    stroke-width: 2;
    stroke-linecap: round;
    stroke-linejoin: round;
  }
  .emoji {
    width: 30px;
    height: 30px;
  }
  .fill {
    flex: 1;
  }

  .top {
    display: grid;
    grid-template-columns: 1fr auto 1fr;
    align-items: center;
    border-bottom: 1px solid #17252f;
    color: #b0b4b8;
    font-size: 25px;
  }
  .side {
    display: flex;
    align-items: center;
    gap: 35px;
    padding-left: 28px;
  }
  .tools {
    justify-content: flex-end;
    gap: 36px;
    padding: 0 26px 0 0;
  }
  .tools button:last-child {
    margin-left: 13px;
  }
  .workspace {
    gap: 6px;
    margin-right: -4px;
    color: var(--text);
  }
  .workspace .line {
    width: 24px;
    height: 24px;
    color: #7a8287;
  }
  .side .line {
    stroke-width: 2;
  }
  .tools .line {
    width: 28px;
    height: 28px;
  }
  .tools .g-minus,
  .tools .g-close,
  .tools .g-restore {
    width: 25px;
    height: 25px;
  }
  .off {
    color: #1d3436;
  }

  main {
    display: grid;
    grid-template-columns: 84px 526px minmax(0, 1fr) 640px 81px;
    min-height: 0;
  }
  .rail {
    display: flex;
    flex-direction: column;
    align-items: center;
    gap: 10px;
    padding: 10px 0;
    color: #6f7b81;
  }
  .rail button {
    justify-content: center;
    width: 64px;
    height: 64px;
    border-radius: 12px;
  }
  .rail .line {
    width: 32px;
    height: 32px;
  }
  .rail .on {
    background: #283c4a;
    color: #7b858c;
  }
  .avatar {
    width: 30px;
    height: 30px;
  }

  aside {
    display: flex;
    flex-direction: column;
    min-height: 0;
    background: var(--base);
  }
  .head {
    display: flex;
    flex: none;
    align-items: center;
    gap: 8px;
    height: 84px;
    margin: 0;
    padding: 2px 0 0 24px;
    background: var(--head);
    color: var(--teal);
    font-size: 31px;
    font-weight: 700;
  }
  .info .head {
    padding-left: 20px;
  }
  .head .line {
    width: 32px;
    height: 32px;
  }
  .node {
    gap: 12px;
    width: 100%;
    height: 60px;
    border-radius: 0 12px 12px 0;
    text-align: left;
    white-space: nowrap;
  }
  .node .line {
    width: 32px;
    height: 32px;
    color: #737d83;
  }
  .node.current {
    background: var(--raised);
  }
  .tree {
    flex: 1;
    padding: 0 16px;
  }
  .tree .g-spark {
    width: 24px;
    height: 24px;
    margin: 0 4px;
    stroke-width: 1.6;
  }
  .tree .current {
    color: var(--teal);
    font-weight: 700;
  }
  .l1 {
    padding-left: 10px;
  }
  .l2 {
    padding-left: 46px;
  }
  .l3 {
    padding-left: 82px;
  }
  .closed {
    gap: 4px;
    padding-left: 26px;
  }

  .editor {
    position: relative;
    display: flex;
    flex-direction: column;
    min-width: 0;
    min-height: 0;
    border: solid #000;
    border-width: 0 4px;
    background: var(--base);
  }
  .tabs {
    display: flex;
    flex: none;
    height: 86px;
    border-bottom: 2px solid #24394a;
    background: var(--deep);
    color: #a3a8ac;
  }
  .tab {
    position: relative;
    justify-content: center;
    width: 85px;
    margin-right: 5px;
    padding: 2px 4px 0 0;
    border-top: 4px solid transparent;
    border-bottom: 6px solid transparent;
  }
  .tab.current {
    border-color: #036b67 transparent #3c7085;
    border-radius: 8px 16px 4px 0;
    background: var(--base);
  }
  .pin {
    position: absolute;
    top: 7px;
    right: 0;
  }
  .pin .emoji {
    width: 23px;
    height: 23px;
  }
  .add {
    margin-left: 32px;
  }
  .tabs .more {
    margin-right: 18px;
  }
  .tabs .more .line {
    width: 44px;
    height: 44px;
    stroke-width: 1.7;
  }
  .crumbs {
    display: flex;
    flex: none;
    align-items: center;
    gap: 3px;
    height: 60px;
    padding-left: 12px;
    color: var(--muted);
  }
  .crumbs > .line {
    width: 32px;
    height: 32px;
    stroke-width: 1.7;
  }
  .crumbs a {
    display: flex;
    align-items: center;
    gap: 8px;
    margin: 0 6px 0 5px;
  }
  .crumbs a .emoji {
    margin: 8px 6px 0 4px;
  }
  .doc {
    justify-content: center;
    width: 44px;
    height: 48px;
    border-radius: 8px;
    background: var(--raised);
  }
  .crumbs .more .line {
    width: 32px;
    height: 32px;
  }
  .crumbs .more {
    margin-right: 24px;
  }
  .level {
    font: 400 27px/32px Roboto, sans-serif;
  }
  .level small {
    font-size: 19px;
    font-weight: 700;
  }

  .page {
    display: grid;
    grid-template-columns: 569fr 561fr;
    gap: 8px;
    min-height: 0;
    overflow: hidden;
    padding: 0 212px 0 188px;
    font-size: 32px;
  }
  h1 {
    height: 79px;
    margin: 0 0 13px;
    padding: 8px 8px 0;
    border-radius: 0 0 8px 8px;
    font: 700 49px/56px Roboto, sans-serif;
  }
  h1 a {
    display: inline-block;
    height: 61px;
    border-bottom: 2px dashed #a3a6a9;
  }
  .area h1 {
    background: #53483e;
    color: #ffd394;
  }
  .resource h1 {
    background: #0f4469;
    color: #a9d6fd;
  }
  .row {
    display: flex;
    align-items: center;
    height: 76px;
  }
  .bullet {
    width: 13px;
    height: 13px;
    margin: 0 35px 0 28px;
    border-radius: 50%;
    background: #9b9fa8;
  }
  .row .emoji {
    width: 32px;
    height: 32px;
    margin: 4px 15px 0 6px;
  }
  .tight .emoji {
    margin-right: 6px;
  }
  .logo .emoji {
    width: 36px;
    height: 36px;
    margin: 4px 9px 0 0;
  }
  .resource .logo .emoji {
    margin: 4px 13px 0 4px;
  }
  .row a {
    border-bottom: 2px solid #2b3743;
    color: var(--link);
    line-height: 44px;
  }
  .row .dash {
    border-bottom: 2px dashed var(--link);
  }
  .row .dash.caret {
    border-right: 2px solid var(--link);
  }
  .nested {
    margin-left: 34px;
    padding-left: 33px;
    border-left: 1px solid #25404a;
  }
  .handle {
    margin-left: auto;
    color: #6f7b81;
  }
  .scrub {
    position: absolute;
    top: 652px;
    right: 26px;
    width: 20px;
    height: 400px;
    margin: 0;
    appearance: none;
    background: linear-gradient(#5a93aa, #5a93aa) center / 4px 100% no-repeat;
    writing-mode: vertical-lr;
  }
  .scrub::-webkit-slider-thumb {
    width: 20px;
    height: 20px;
    appearance: none;
    border-radius: 50%;
    background: #3f7187;
  }
  .thumb {
    position: absolute;
    top: 424px;
    right: 8px;
    width: 4px;
    height: 456px;
    border-radius: 2px;
    background: #26323f;
  }

  .outline {
    height: 736px;
    padding: 0 16px 0 12px;
  }
  .outline .node {
    gap: 10px;
    padding-left: 16px;
  }
  .outline .node .line,
  .outline .node .emoji {
    width: 25px;
    height: 25px;
  }
  .outline .level {
    margin-right: 2px;
    color: #2ee6e0;
  }
  mark {
    color: inherit;
    font-weight: 700;
  }
  .rose {
    background: #44272e;
    color: #f39a94;
  }
  .green {
    background: #37564f;
    color: #b4ddb5;
  }
  .amber {
    background: #53483e;
    color: #ffd394;
  }
  .blue {
    background: #1c4f76;
    color: #a9d6fd;
  }
  .slate {
    background: #475a6e;
    color: #9b9fa4;
  }
  .ruled {
    border-top: 1px solid #000;
  }
  .filter {
    justify-content: center;
    width: 50px;
    height: 40px;
    border: 1px solid #717b82;
    border-radius: 8px;
    background: var(--base);
    color: #a3a8ac;
  }
  .filter .line {
    width: 30px;
    height: 30px;
  }
  .ruled .filter {
    margin-left: 24px;
  }
  .empty {
    flex: 1;
    margin: 0;
    padding: 10px 28px;
    color: var(--muted);
  }
  .count {
    width: 60px;
    margin: 0 8px 0 16px;
    border-radius: 4px;
    background: var(--base);
    color: #747c82;
    font-size: 24px;
    font-weight: 400;
    line-height: 44px;
    text-align: center;
  }

  footer {
    display: flex;
    align-items: center;
    padding: 2px 24px 0 28px;
    border-top: 1px solid #17252f;
    color: var(--muted);
    font-size: 24px;
    white-space: nowrap;
  }
  .message {
    margin-left: 28px;
  }
  .message span {
    font-size: 25px;
  }
  .progress {
    width: 128px;
    height: 8px;
    margin: 0 16px 0 8px;
    border-radius: 4px;
    background: linear-gradient(120deg, #427b92 45%, #6b98a8 45% 82%, #427b92 82%);
  }
  .counts {
    display: flex;
    gap: 16px;
    margin-right: 28px;
  }
  b {
    color: var(--text);
    font-size: 25px;
    font-weight: 400;
  }
</style>
